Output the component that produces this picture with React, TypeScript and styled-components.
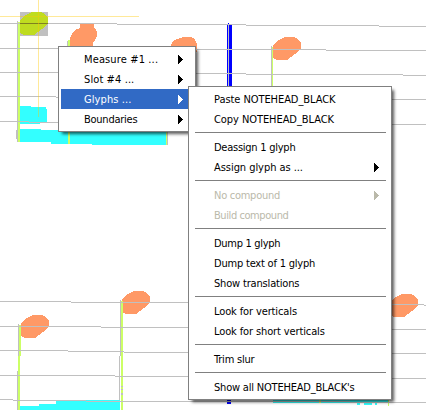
import React from "react";
import styled, { createGlobalStyle } from "styled-components";

const GlobalStyle = createGlobalStyle`
  html, body { margin: 0; padding: 0; background: #fff; overflow: hidden; }
`;

const Sheet = styled.main`
  position: relative;
  width: 426px;
  height: 410px;
  overflow: hidden;
  background: #fff;
  font: 11px/20px "DejaVu Sans Condensed", "DejaVu Sans", sans-serif;
  font-stretch: condensed;
`;

const Score = styled.svg`
  display: block;
  width: 426px;
  height: 410px;
`;

const Menu = styled.ul<{ $x: number; $y: number; $w: number }>`
  position: absolute;
  left: ${(p) => p.$x}px;
  top: ${(p) => p.$y}px;
  width: ${(p) => p.$w}px;
  box-sizing: border-box;
  margin: 0;
  padding: 2px;
  list-style: none;
  border: 1px solid #808080;
  background: #fff;
  box-shadow: 3px 3px 3px -1px rgba(0, 0, 0, 0.65);
`;

const Item = styled.li<{ $selected?: boolean; $disabled?: boolean }>`
  display: flex;
  align-items: center;
  justify-content: space-between;
  height: 20px;
  padding: 0 10px 0 23px;
  white-space: pre;
  color: ${(p) => (p.$selected ? "#fff" : p.$disabled ? "#bab9aa" : "#000")};
  background: ${(p) => (p.$selected ? "#316ac5" : "transparent")};
`;

const Label = styled.span<{ $spacing: number }>`
  padding-top: 2px;
  letter-spacing: ${(p) => p.$spacing}px;
`;

const Arrow = styled.svg`
  width: 5px;
  height: 9px;
  fill: currentColor;
`;

const Separator = styled.li`
  height: 1px;
  margin: 3px 3px 4px 4px;
  background: #808080;
`;

type Entry = { text: string; spacing?: number; sub?: boolean; selected?: boolean; disabled?: boolean } | null;

const mainEntries: Entry[] = [
  { text: "Measure #1 ...", spacing: 0.13, sub: true },
  { text: "Slot #4 ...", spacing: 0.1, sub: true },
  { text: "Glyphs ...", spacing: 0.1, sub: true, selected: true },
  { text: "Boundaries", spacing: -0.25, sub: true },
];

const glyphEntries: Entry[] = [
  { text: "Paste NOTEHEAD_BLACK", spacing: -0.07 },
  { text: "Copy NOTEHEAD_BLACK", spacing: -0.07 },
  null,
  { text: "Deassign 1 glyph", spacing: -0.25 },
  { text: "Assign glyph as ...", spacing: -0.05, sub: true },
  null,
  { text: "No compound", spacing: -0.27, sub: true, disabled: true },
  { text: "Build compound", spacing: -0.42, disabled: true },
  null,
  { text: "Dump 1 glyph", spacing: -0.3 },
  { text: "Dump text of 1 glyph", spacing: -0.2 },
  { text: "Show translations", spacing: -0.17 },
  null,
  { text: "Look for verticals", spacing: -0.12 },
  { text: "Look for short verticals", spacing: -0.12 },
  null,
  { text: "Trim slur", spacing: -0.2 },
  null,
  { text: "Show all NOTEHEAD_BLACK's", spacing: -0.2 },
];

function PopupMenu({ x, y, w, entries }: { x: number; y: number; w: number; entries: Entry[] }) {
  return (
    <Menu $x={x} $y={y} $w={w}>
      {entries.map((e, i) =>
        e ? (
          <Item key={i} $selected={e.selected} $disabled={e.disabled}>
            <Label $spacing={e.spacing ?? 0}>{e.text}</Label>
            {e.sub && (
              <Arrow viewBox="0 0 5 9" shapeRendering="crispEdges">
                <path d="M0 0h1v1h1v1h1v1h1v1h1v1h-1v1h-1v1h-1v1h-1v1h-1z" />
              </Arrow>
            )}
          </Item>
        ) : (
          <Separator key={i} />
        )
      )}
    </Menu>
  );
}

// Notehead outline, with its origin at the top-left of a 28x23 box.
const HEAD = "M0 8L2 6L5 3L8 2L12 0H21L25 2L28 6V11L25 14L22 17L18 20L14 23H4L0 21Z";

// Each staff line is drawn as level runs: [x where the run starts, y].
const staffLines: number[][][] = [
  [[0, 23], [117, 24], [246, 25], [379, 26]],
  [[0, 48], [180, 49], [326, 50]],
  [[0, 72], [160, 73], [246, 74], [403, 75]],
  [[0, 96], [56, 97], [300, 99]],
  [[0, 121], [29, 122], [300, 124]],
  [[0, 301], [71, 302], [300, 304], [424, 305]],
  [[0, 326], [101, 327], [300, 329]],
  [[0, 350], [68, 351], [124, 352], [300, 353]],
  [[0, 375], [115, 376], [300, 378]],
  [[0, 399], [13, 400], [86, 401], [350, 402]],
];

export default function App() {
  return (
    <Sheet>
      <GlobalStyle />
      <Score viewBox="0 0 426 410" shapeRendering="crispEdges">
        <path fill="#c0c0c0" d="M20 12H48V36H20Z M17 21H18V142H17Z M16 130H17V139H16Z M67 41H68V48H67Z M167 130H168V145H167Z M271 46H272V90H271Z M18 324H19V371H18Z M17 371H18V410H17Z M120 300H121V356H120Z M119 356H120V410H119Z" />
        <path fill="#bfdc20" transform="translate(20 12)" d={HEAD} />
        <g fill="#ff9966">
          <path d="M80 24H94V27L96 30L97 32V36L95 40L93 43V46H70V38L72 34L75 30L80 28Z" />
          <path d="M171 46L172 42L177 39L183 37H191L195 39L196 42L197 44V52H171Z" />
          <path transform="translate(273 37)" d={HEAD} />
          <path transform="translate(21 315)" d={HEAD} />
          <path transform="translate(122 291)" d={HEAD} />
          <path transform="translate(390 294)" d={HEAD} />
        </g>
        <path fill="#33ffff" d="M20 106H31V107H46V109H47V122H45V123H40V124H20Z M20 129H41V130H167V145H92V144H51V142H20Z M20 406H39V404H56V401H86V400H120V410H20Z M273 400H388V403H273Z M357 403H360V405H357Z M364 403H372V405H364Z M375 403H377V405H375Z" />
        <path fill="#ccff66" d="M18 22H20V142H18Z M68 40H70V144H68Z M166 130H167V145H166Z M272 47H273V90H272Z M19 325H21V356H19Z M18 356H20V410H18Z M121 301H123V410H121Z M319 400H321V403H319Z M388 400H389V406H388Z" />
        <path fill="#0000ff" d="M228 23H229V24H232V90H227V24H228Z M227 400H231V404H227Z" />
        <path fill="#c0c0c0" d="M228 25H229V90H228Z M121 386H123V387H121Z M121 389H123V390H121Z M121 393H123V395H121Z" />
        <g fill="#c0c0c0">
          {staffLines.map((runs, i) =>
            runs.map(([x, y], j) => (
              <rect key={`${i}-${j}`} x={x} y={y} width={(runs[j + 1]?.[0] ?? 426) - x} height="1" />
            ))
          )}
        </g>
        <path fill="#808020" d="M20 23H48V24H20Z" />
        <path fill="#ffc800" fillOpacity="0.4" d="M0 16H139V17H0Z M38 0H39V117H38Z" />
      </Score>
      <PopupMenu x={58} y={46} w={138} entries={mainEntries} />
      <PopupMenu x={188} y={86} w={204} entries={glyphEntries} />
    </Sheet>
  );
}
